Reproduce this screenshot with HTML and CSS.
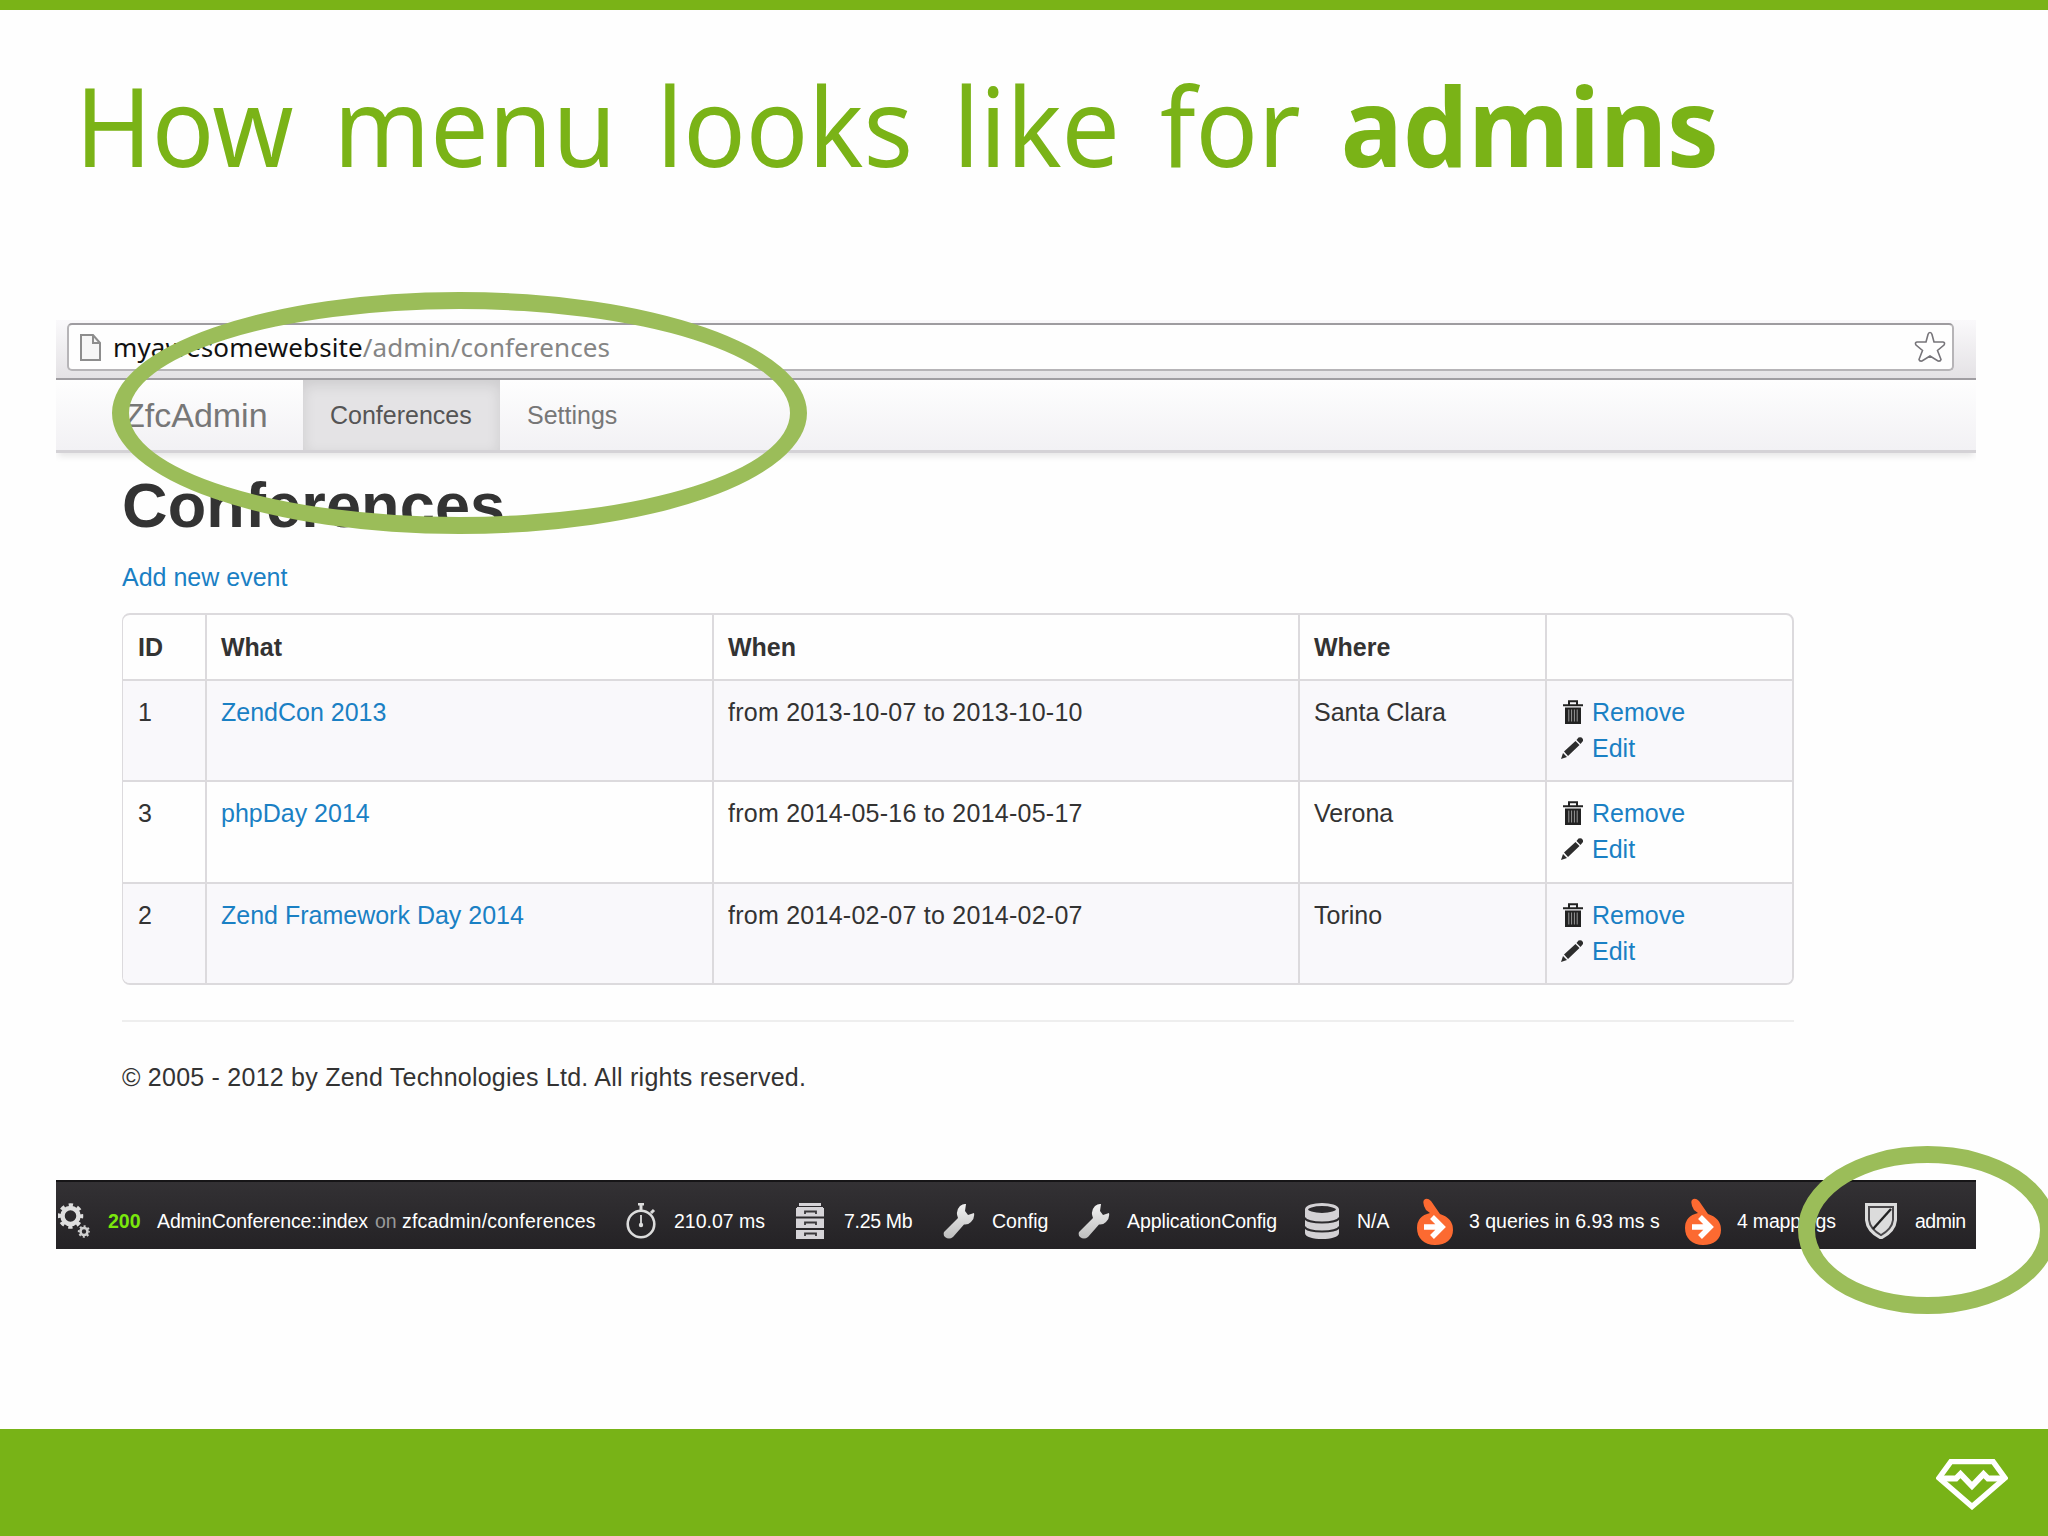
FILE: index.html
```html
<!DOCTYPE html>
<html lang="en">
<head>
    <meta charset="UTF-8">
    <meta name="viewport" content="width=device-width, initial-scale=1.0">
    <title>How menu looks like for admins</title>
    <link rel="stylesheet" href="styles.css">
</head>
<body>
    <!-- Shared icons -->
    <svg class="sprite" aria-hidden="true">
        <defs>
            <linearGradient id="metal" x1="0" y1="0" x2="0" y2="1">
                <stop offset="0" stop-color="#f2f2f2"/>
                <stop offset="1" stop-color="#bdbdbd"/>
            </linearGradient>
        </defs>
        <symbol id="trash" viewBox="0 0 20 24">
            <path d="M6 5V1.2h8V5M0 5.2h20" fill="none" stroke="#222" stroke-width="2"/>
            <path d="M2 7.5h16V24H2z" fill="#222"/>
            <path d="M5.8 9.5v12M8.6 9.5v12M11.4 9.5v12M14.2 9.5v12" stroke="#999" stroke-width="1"/>
        </symbol>
        <symbol id="pencil" viewBox="0 0 22 22">
            <path d="M0 22l2-6 4 4zM3 14.500L14.500 4l4 4L7 19zM15.500 3l2-2.500q3-.8 4 1t.5 2.500L19.500 7z" fill="#2d2d2d"/>
        </symbol>
        <symbol id="wrench" viewBox="0 0 32 36">
            <path d="M1 29L15 15Q12 8 17 3q3-2.500 6-2l-1 7 3 4 6-2q1 5-3 9-3 3-7 2.500L10 34q-4 3-8 0-2-2-1-5z" fill="url(#metal)"/>
        </symbol>
        <symbol id="doctrine" viewBox="0 0 36 47">
            <path d="M9 12Q5 5 7 2q3-3 7 1l9 13q13 4 13 16c0 9-7 15-18 15S0 40 0 30Q0 18 13 15z" fill="#fc6a31"/>
            <path d="M7 29h18M15 19l10 10-10 10" fill="none" stroke="#fff" stroke-width="5.500"/>
        </symbol>
    </svg>

    <div class="slide">
        <h1 class="slide-title">How menu looks like for <strong>admins</strong></h1>

        <div class="browser">
            <div class="address-bar">
                <div class="address-field">
                    <svg class="icon-page" viewBox="0 0 21 27"><path d="M1 1h12l7 8v17H1z" fill="#f6f6f6" stroke="#8d8d8d" stroke-width="2"/><path d="M13 1v8h7" fill="none" stroke="#8d8d8d" stroke-width="2"/></svg>
                    <span class="url"><span class="url-host">myawesomewebsite</span>/admin/conferences</span>
                    <svg class="icon-star" viewBox="0 0 32 32"><path d="M16 1.500q1.500 0 2 2L20 11h9q2.500.5 1 3l-6.500 5.500 3.500 9q-.5 2-3 1.500L16 25l-8 5q-2.500.5-3-1.500l3.500-9L2 14q-1.500-2.500 1-3h9l2-7.500q.5-2 2-2z" fill="#fff" stroke="#77757a" stroke-width="1.600"/></svg>
                </div>
            </div>

            <nav class="navbar">
                <a href="#" class="brand">ZfcAdmin</a>
                <a href="#" class="nav-link active">Conferences</a>
                <a href="#" class="nav-link">Settings</a>
            </nav>

            <main class="container">
                <h2 class="page-title">Conferences</h2>
                <a href="#" class="link add-link">Add new event</a>

                <table class="table">
                    <colgroup>
                        <col class="col-id">
                        <col class="col-what">
                        <col class="col-when">
                        <col class="col-where">
                        <col class="col-actions">
                    </colgroup>
                    <thead>
                        <tr>
                            <th>ID</th>
                            <th>What</th>
                            <th>When</th>
                            <th>Where</th>
                            <th></th>
                        </tr>
                    </thead>
                    <tbody>
                        <tr>
                            <td>1</td>
                            <td><a href="#" class="link">ZendCon 2013</a></td>
                            <td class="dates">from 2013-10-07 to 2013-10-10</td>
                            <td>Santa Clara</td>
                            <td>
                                <a href="#" class="link action"><svg class="icon-trash"><use href="#trash"/></svg>Remove</a>
                                <a href="#" class="link action"><svg class="icon-pencil"><use href="#pencil"/></svg>Edit</a>
                            </td>
                        </tr>
                        <tr>
                            <td>3</td>
                            <td><a href="#" class="link">phpDay 2014</a></td>
                            <td class="dates">from 2014-05-16 to 2014-05-17</td>
                            <td>Verona</td>
                            <td>
                                <a href="#" class="link action"><svg class="icon-trash"><use href="#trash"/></svg>Remove</a>
                                <a href="#" class="link action"><svg class="icon-pencil"><use href="#pencil"/></svg>Edit</a>
                            </td>
                        </tr>
                        <tr>
                            <td>2</td>
                            <td><a href="#" class="link">Zend Framework Day 2014</a></td>
                            <td class="dates">from 2014-02-07 to 2014-02-07</td>
                            <td>Torino</td>
                            <td>
                                <a href="#" class="link action"><svg class="icon-trash"><use href="#trash"/></svg>Remove</a>
                                <a href="#" class="link action"><svg class="icon-pencil"><use href="#pencil"/></svg>Edit</a>
                            </td>
                        </tr>
                    </tbody>
                </table>

                <p class="copyright">© 2005 - 2012 by Zend Technologies Ltd. All rights reserved.</p>
            </main>

            <div class="toolbar">
                <div class="tool tool-request">
                    <svg class="tool-icon" viewBox="0 0 32 35">
                        <circle cx="12.500" cy="12.500" r="8" fill="none" stroke="#dedede" stroke-width="4.500"/>
                        <circle cx="12.500" cy="12.500" r="11" fill="none" stroke="#dedede" stroke-width="3.500" stroke-dasharray="4.300 4.340" stroke-dashoffset="2.150"/>
                        <circle cx="26" cy="28" r="3.500" fill="none" stroke="#cfcfcf" stroke-width="2.600"/>
                        <circle cx="26" cy="28" r="5.200" fill="none" stroke="#cfcfcf" stroke-width="2" stroke-dasharray="2 2.084" stroke-dashoffset="1"/>
                    </svg>
                    <span class="status">200</span>
                    <span class="controller">AdminConference::index</span>
                    <span class="on">on</span>
                    <span class="route">zfcadmin/conferences</span>
                </div>
                <div class="tool tool-time">
                    <svg class="tool-icon" viewBox="0 0 30 36">
                        <ellipse cx="15" cy="21" rx="13.300" ry="13.300" fill="none" stroke="#dcdcdc" stroke-width="2.600"/>
                        <path d="M12 1h6M15 1v6M25 10l3-3" stroke="#dcdcdc" stroke-width="3" fill="none"/>
                        <path d="M15 12v12" stroke="#dcdcdc" stroke-width="1.800"/>
                        <circle cx="15" cy="22" r="2.200" fill="#dcdcdc"/>
                    </svg>
                    <span>210.07 ms</span>
                </div>
                <div class="tool tool-memory">
                    <svg class="tool-icon" viewBox="0 0 28 36">
                        <path d="M3 0h22v3H3zM1 4h26v9H1zM0 5h28v8.500H0zM0 15.500h28v9.500H0zM0 27h28v9H0z" fill="#d6d4d8"/>
                        <path d="M9 11V8.500h11V11M9 22v-2.500h11V22M9 33v-2.500h11V33" fill="none" stroke="#3a383b" stroke-width="1.800"/>
                    </svg>
                    <span>7.25 Mb</span>
                </div>
                <div class="tool tool-config">
                    <svg class="tool-icon"><use href="#wrench"/></svg>
                    <span>Config</span>
                </div>
                <div class="tool tool-app">
                    <svg class="tool-icon"><use href="#wrench"/></svg>
                    <span>ApplicationConfig</span>
                </div>
                <div class="tool tool-db">
                    <svg class="tool-icon" viewBox="0 0 34 36">
                        <path d="M0 6v24c0 8 34 8 34 0V6z" fill="#d3d1d4"/>
                        <path d="M0 14.500c0 6.500 34 6.500 34 0M0 23.500c0 6.500 34 6.500 34 0" fill="none" stroke="#2c2a2d" stroke-width="2"/>
                        <ellipse cx="17" cy="6.500" rx="15.500" ry="5" fill="#2c2a2d" stroke="#d3d1d4" stroke-width="3"/>
                    </svg>
                    <span>N/A</span>
                </div>
                <div class="tool tool-queries">
                    <svg class="tool-icon"><use href="#doctrine"/></svg>
                    <span>3 queries in 6.93 ms s</span>
                </div>
                <div class="tool tool-mappings">
                    <svg class="tool-icon"><use href="#doctrine"/></svg>
                    <span>4 mappings</span>
                </div>
                <div class="tool tool-user">
                    <svg class="tool-icon" viewBox="0 0 32 36">
                        <path d="M1.500 1.500h29V17q-1 11-14.500 18Q2.500 28 1.500 17z" fill="#4a484b" stroke="#dcdcdc" stroke-width="3"/>
                        <path d="M5 5h22v12q-1 8-11 14Q6 25 5 17z" fill="#dcdcdc"/>
                        <path d="M26 6L8 26" stroke="#222" stroke-width="2.400"/>
                    </svg>
                    <span>admin</span>
                </div>
            </div>
        </div>

        <footer class="slide-footer">
            <svg class="logo" viewBox="0 0 72 51">
                <path d="M15 2.500h42L69 19 36 47.500 3 19z" fill="none" stroke="#fff" stroke-width="5.500"/>
                <path d="M3 19.500h17l4.500-4.500L36 27l11.500-12 4.500 4.500h17" fill="none" stroke="#fff" stroke-width="6"/>
            </svg>
        </footer>

        <!-- Highlight rings -->
        <div class="ring ring-menu"></div>
        <div class="ring ring-user"></div>
    </div>
</body>
</html>
```

FILE: styles.css
```css
* {
    margin: 0;
    padding: 0;
    box-sizing: border-box;
}

body {
    font-family: "Liberation Sans", Arial, sans-serif;
    font-size: 25px;
    line-height: 36px;
    color: #333;
    background: #fefefe;
}

a {
    text-decoration: none;
}

svg {
    display: block;
    flex-shrink: 0;
}

.sprite {
    position: absolute;
    width: 0;
    height: 0;
}

.slide {
    position: relative;
    width: 2048px;
    height: 1536px;
    overflow: hidden;
    display: flex;
    flex-direction: column;
    border-top: 10px solid #7ab317;
}

.slide-title {
    height: 310px;
    padding: 54px 0 0 80px;
    font-family: "Noto Sans", sans-serif;
    font-size: 110px;
    font-weight: 400;
    line-height: 120px;
    word-spacing: 14px;
    white-space: nowrap;
    color: #7ab317;
    transform: scaleX(0.94);
    transform-origin: left;
}

/* Browser window */
.browser {
    width: 1920px;
    height: 929px;
    margin-left: 56px;
    display: flex;
    flex-direction: column;
}

.address-bar {
    height: 60px;
    padding: 3px 22px 8px 11px;
    background: linear-gradient(#faf9fb, #e4e2e5);
    border-bottom: 2px solid #a09ea2;
}

.address-field {
    height: 48px;
    padding: 0 6px 0 11px;
    display: flex;
    align-items: center;
    background: #fefefe;
    border: 2px solid #b6b4b7;
    border-top-color: #9e9ca0;
    border-radius: 5px;
}

.icon-page {
    width: 21px;
    height: 27px;
}

.url {
    margin-left: 12px;
    font-family: "Noto Sans", sans-serif;
    font-size: 26px;
    letter-spacing: 0.1px;
    color: #858585;
}

.url-host {
    color: #111;
}

.icon-star {
    width: 32px;
    height: 32px;
    margin-left: auto;
}

.navbar {
    height: 73px;
    display: flex;
    background: linear-gradient(#fefefe, #f2f1f4);
    border-bottom: 3px solid #d4d2d6;
    box-shadow: 0 5px 7px -2px rgba(0, 0, 0, 0.1);
    clip-path: inset(0 0 -20px 0);
}

.brand {
    width: 247px;
    padding-left: 68px;
    font-size: 34px;
    line-height: 71px;
    color: #777;
}

.nav-link {
    padding: 0 27px;
    line-height: 71px;
    color: #777;
}

.nav-link.active {
    width: 197px;
    color: #555;
    background: #e4e3e5;
    box-shadow: inset 0 5px 14px rgba(0, 0, 0, 0.1);
}

/* Page content */
.container {
    width: 1672px;
    height: 727px;
    margin-left: 66px;
}

.page-title {
    padding-top: 15px;
    font-size: 63px;
    line-height: 74px;
    letter-spacing: 0.15px;
}

.link {
    color: #1a80c4;
}

.add-link {
    display: block;
    margin: 17px 0 18px;
}

.table {
    width: 1672px;
    table-layout: fixed;
    border-collapse: separate;
    border-spacing: 0;
    border: 2px solid #dcdadd;
    border-left-width: 1px;
    border-radius: 8px;
    overflow: hidden;
}

.col-id { width: 82px; }
.col-what { width: 507px; }
.col-when { width: 586px; }
.col-where { width: 247px; }
.col-actions { width: 247px; }

.table th,
.table td {
    padding: 14px 15px 0;
    vertical-align: top;
    text-align: left;
    white-space: nowrap;
}

.table th {
    height: 64px;
}

.table td {
    height: 101.4px;
    border-top: 2px solid #dcdadd;
}

.table td {
    padding-top: 13px;
}

.table .dates {
    letter-spacing: 0.25px;
}

.table th + th,
.table td + td {
    padding-left: 14px;
    border-left: 2px solid #dcdadd;
}

.table tbody tr:nth-child(odd) td {
    background: #f9f8fb;
}

.action {
    display: flex;
    align-items: center;
}

.icon-trash {
    width: 20px;
    height: 24px;
    margin: 0 9px 0 2px;
}

.icon-pencil {
    width: 22px;
    height: 22px;
    margin-right: 9px;
}

.copyright {
    margin-top: 35px;
    padding-top: 37px;
    border-top: 2px solid #eee;
    letter-spacing: 0.24px;
}

/* Developer toolbar */
.toolbar {
    height: 69px;
    display: flex;
    background: linear-gradient(#333134, #242225);
    border-top: 2px solid #161517;
    font-size: 19.5px;
    line-height: 78px;
    color: #fff;
    white-space: nowrap;
}

.tool {
    display: flex;
    align-items: center;
    height: 78px;
}

.tool-icon {
    width: 32px;
    height: 36px;
    margin-right: 18px;
}

.tool-request {
    width: 570px;
    padding-left: 2px;
}

.status {
    width: 49px;
    font-weight: 700;
    color: #7ae80c;
}

.controller {
    width: 218px;
    letter-spacing: -0.12px;
}

.on {
    width: 27px;
    color: #999;
}

.route {
    letter-spacing: 0.2px;
}

.tool-time { width: 170px; }
.tool-time .tool-icon { width: 30px; }
.tool-memory { width: 147px; letter-spacing: -0.3px; }
.tool-memory .tool-icon { width: 28px; margin-right: 20px; }
.tool-config { width: 135px; }
.tool-app { width: 227px; letter-spacing: -0.1px; }
.tool-config .tool-icon,
.tool-app .tool-icon { margin-right: 17px; }
.tool-db { width: 112px; }
.tool-db .tool-icon { width: 34px; }
.tool-queries { width: 268px; }
.tool-mappings { width: 180px; letter-spacing: -0.2px; }
.tool-queries .tool-icon,
.tool-mappings .tool-icon {
    width: 36px;
    height: 47px;
    margin-right: 16px;
}
.tool-user { letter-spacing: -0.5px; }

/* Slide footer */
.slide-footer {
    margin-top: auto;
    height: 107px;
    padding: 30px 40px 0 0;
    display: flex;
    justify-content: flex-end;
    align-items: flex-start;
    background: #78b317;
}

.logo {
    width: 72px;
    height: 51px;
}

.ring {
    position: absolute;
    border: 17px solid #9bbd59;
    border-radius: 50%;
}

.ring-menu {
    left: 112px;
    top: 282px;
    width: 695px;
    height: 242px;
}

.ring-user {
    left: 1798px;
    top: 1136px;
    width: 259px;
    height: 168px;
}
```
